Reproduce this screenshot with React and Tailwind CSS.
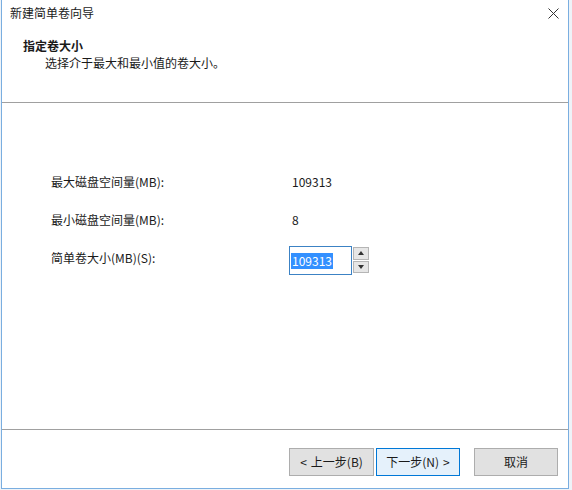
import React from 'react';

const font = { fontFamily: '"Noto Sans CJK SC", "Microsoft YaHei", sans-serif' };

const Row = ({ label, value }) => (
  <div className="flex items-center h-[16px]">
    <div className="w-[288px] pl-[49px]">{label}</div>
    <div className="pl-[2px]">{value}</div>
  </div>
);

const Spinner = () => (
  <div className="flex flex-col w-[16px] h-[26px] ml-[1px] mt-[1px] gap-[1px]">
    <div className="flex-1 bg-[#e6e6e6] border border-[#b5b5b5] flex items-center justify-center">
      <svg width="6" height="4" viewBox="0 0 6 4"><path d="M3 0 L6 4 L0 4 Z" fill="#333" /></svg>
    </div>
    <div className="flex-1 bg-[#e6e6e6] border border-[#b5b5b5] flex items-center justify-center">
      <svg width="6" height="4" viewBox="0 0 6 4"><path d="M0 0 L6 0 L3 4 Z" fill="#333" /></svg>
    </div>
  </div>
);

const App = () => {
  return (
    <div className="w-[572px] h-[490px] bg-[#eef3f8] pl-[1px] text-[12px] leading-[16px] text-[#1a1a1a]" style={font}>
      <div className="w-[568px] h-[489px] bg-white border-l border-r border-b border-[#7aaee0] flex flex-col">
        <div className="h-[26px] flex items-center justify-between pl-[8px] pr-[9px]">
          <span>新建简单卷向导</span>
          <svg width="11" height="11" viewBox="0 0 11 11">
            <path d="M0.5 0.5 L10.5 10.5 M10.5 0.5 L0.5 10.5" stroke="#333" strokeWidth="1" />
          </svg>
        </div>
        <div className="h-[76px] pt-[12px]">
          <div className="pl-[21px] font-bold">指定卷大小</div>
          <div className="pl-[43px] mt-[1px]">选择介于最大和最小值的卷大小。</div>
        </div>
        <div className="h-px bg-[#a0a0a0]" />
        <div className="h-[326px] pt-[71px] flex flex-col">
          <Row label="最大磁盘空间量(MB):" value="109313" />
          <div className="mt-[22px]">
            <Row label="最小磁盘空间量(MB):" value="8" />
          </div>
          <div className="mt-[18px] flex items-start h-[29px]">
            <div className="w-[287px] pl-[49px] mt-[4px]">简单卷大小(MB)(S):</div>
            <div className="w-[63px] h-[29px] border border-[#3c82c4] flex items-center pl-[1px]">
              <span className="bg-[#3390ff] text-white px-[1px]">109313</span>
            </div>
            <Spinner />
          </div>
        </div>
        <div className="h-px bg-[#a0a0a0]" />
        <div className="flex-1 flex items-start justify-end pt-[18px] pr-[10px]">
          <button className="w-[85px] h-[28px] bg-[#e1e1e1] border border-[#adadad] flex items-center justify-center gap-[4px]">
            <span>&lt;</span>
            <span>上一步(B)</span>
          </button>
          <button className="w-[84px] h-[28px] ml-[2px] bg-[#e5f1fb] border border-[#0078d7] flex items-center justify-center gap-[4px]">
            <span>下一步(N)</span>
            <span>&gt;</span>
          </button>
          <button className="w-[84px] h-[28px] ml-[14px] bg-[#e1e1e1] border border-[#adadad] flex items-center justify-center">取消</button>
        </div>
      </div>
    </div>
  );
};

export default App;
